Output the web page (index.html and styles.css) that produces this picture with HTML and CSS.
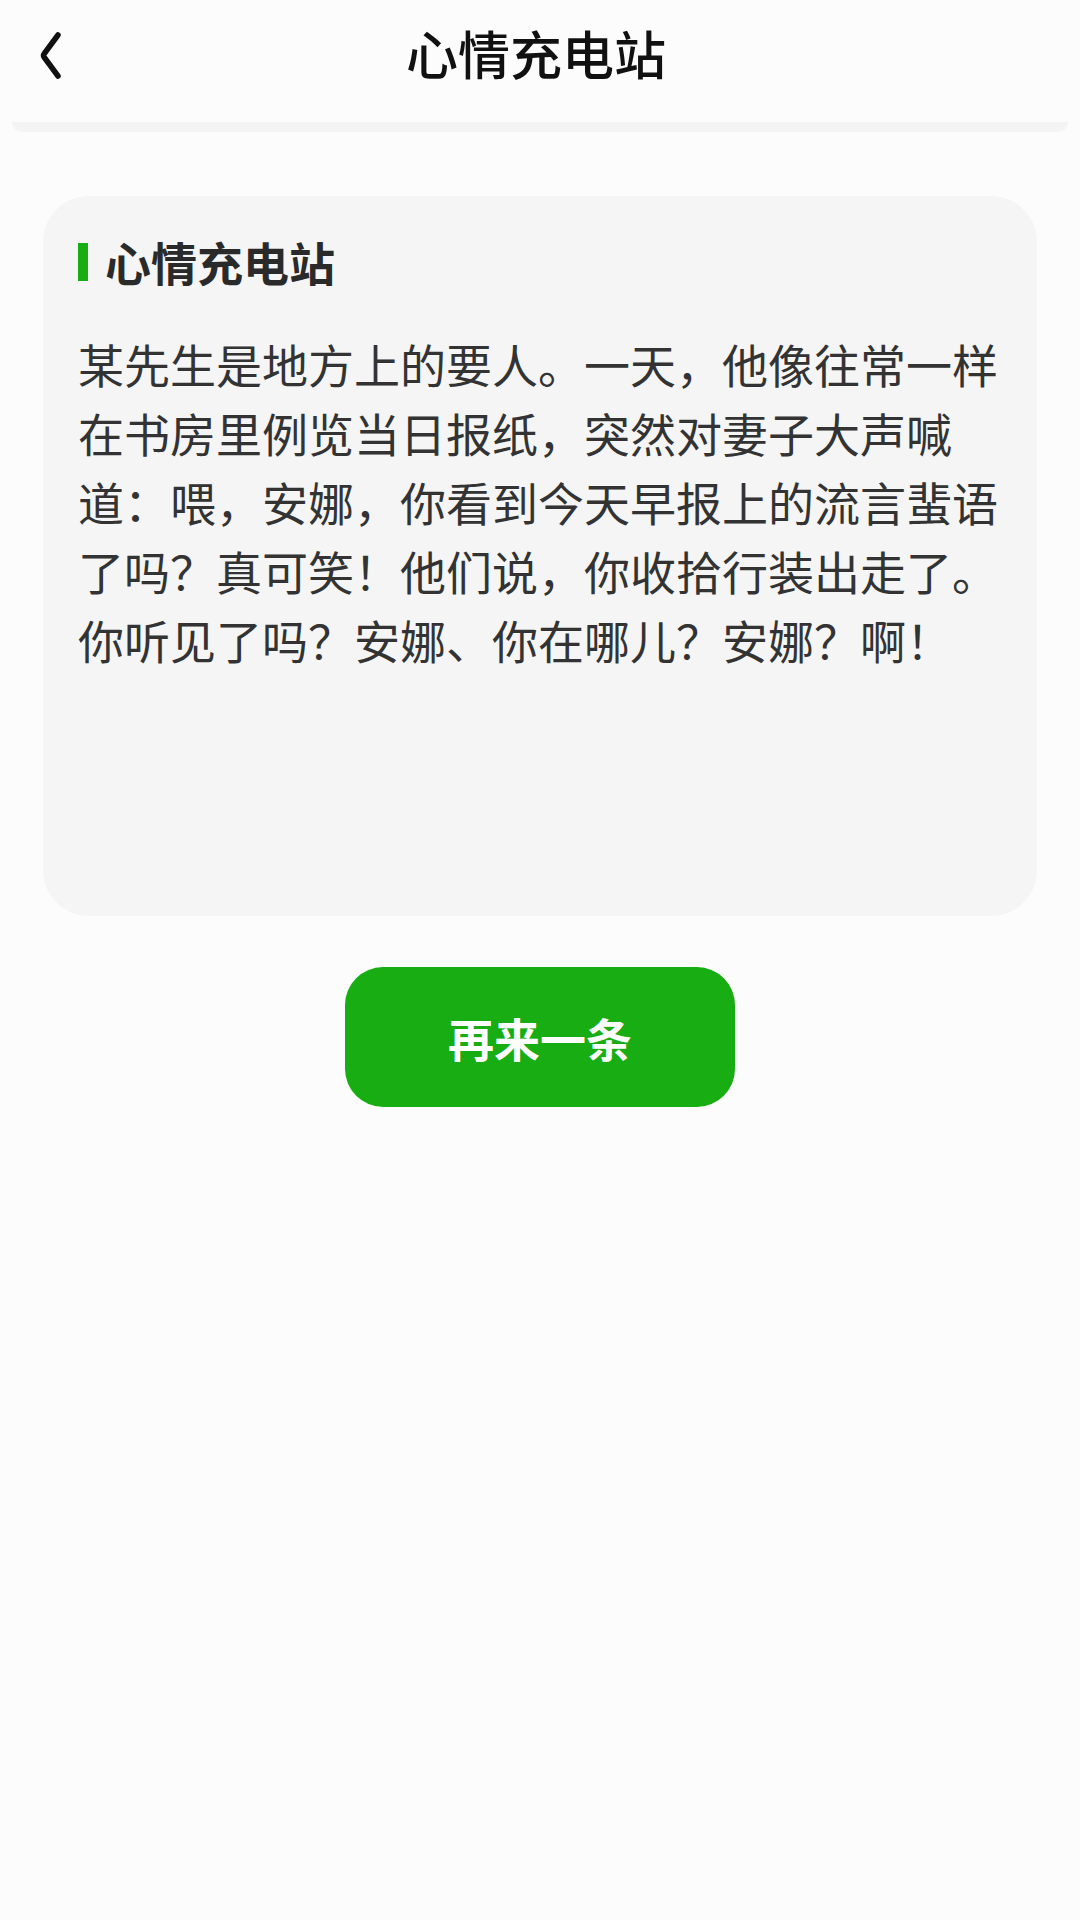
FILE: index.html
```html
<!DOCTYPE html>
<html lang="zh-CN">
<head>
<meta charset="utf-8">
<link rel="stylesheet" href="styles.css">
</head>
<body>
<div class="page">
  <header class="nav">
    <div class="back">
      <svg width="24" height="48" viewBox="0 0 24 48">
        <path d="M19 4 L5 23 Q4 24.5 5 26 L19 45" fill="none" stroke="#111" stroke-width="5.5" stroke-linecap="round" stroke-linejoin="round"/>
      </svg>
    </div>
    <div class="nav-title">心情充电站</div>
  </header>
  <div class="nav-shadow"></div>
  <main class="content">
    <section class="card">
      <h2 class="card-title"><span class="bar"></span>心情充电站</h2>
      <p class="card-text">某先生是地方上的要人。一天，他像往常一样在书房里例览当日报纸，突然对妻子大声喊道：喂，安娜，你看到今天早报上的流言蜚语了吗？真可笑！他们说，你收拾行装出走了。你听见了吗？安娜、你在哪儿？安娜？啊！</p>
    </section>
    <div class="actions">
      <button class="btn">再来一条</button>
    </div>
  </main>
</div>
</body>
</html>
```
FILE: styles.css
```css
html, body {
  margin: 0;
  padding: 0;
  background: #fcfcfc;
  font-family: "Noto Sans CJK SC", "Noto Sans", sans-serif;
}
.page {
  width: 1080px;
  min-height: 1920px;
  background: #fcfcfc;
}
.nav {
  position: relative;
  height: 122px;
  display: flex;
  align-items: flex-start;
  justify-content: center;
}
.back {
  position: absolute;
  left: 39px;
  top: 31px;
  width: 24px;
  height: 48px;
}
.back svg { display: block; }
.nav-title {
  margin-top: 20px;
  margin-right: 8px;
  font-size: 52px;
  line-height: 66px;
  font-weight: 500;
  color: #111;
}
.nav-shadow {
  height: 10px;
  margin: 0 12px;
  background: #f4f4f4;
  border-radius: 0 0 18px 18px;
}
.content {
  padding: 64px 43px 0;
}
.card {
  box-sizing: border-box;
  height: 720px;
  background: #f5f5f5;
  border-radius: 46px;
  padding: 31px 35px;
}
.card-title {
  margin: 0;
  display: flex;
  align-items: center;
  font-size: 46px;
  line-height: 69px;
  font-weight: 700;
  color: #2a2a2a;
}
.bar {
  width: 10px;
  height: 38px;
  background: #17ad13;
  margin-right: 17px;
}
.card-text {
  margin: 33px 0 0;
  font-size: 46px;
  line-height: 69px;
  color: #333;
}
.actions {
  display: flex;
  justify-content: center;
  padding-top: 51px;
}
.btn {
  width: 390px;
  height: 140px;
  border: none;
  border-radius: 38px;
  background: #17ad13;
  color: #fff;
  font-family: "Noto Sans CJK SC", sans-serif;
  font-size: 46px;
  font-weight: 700;
  padding: 0;
}
```
